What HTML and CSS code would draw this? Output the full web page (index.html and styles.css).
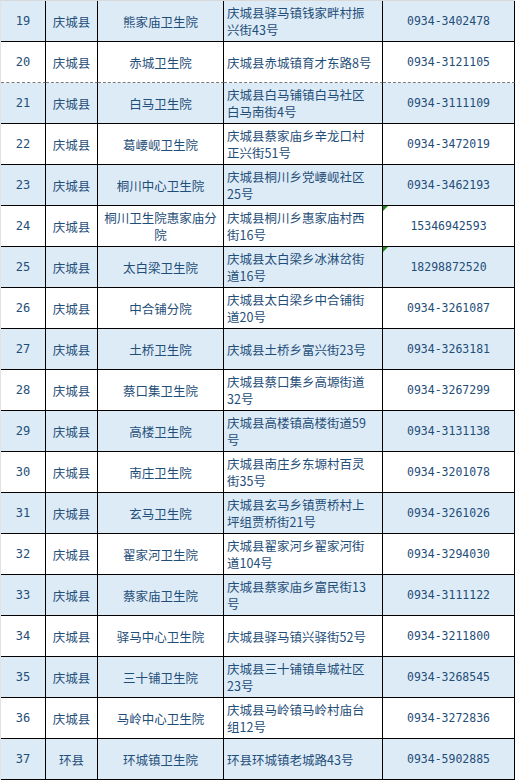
FILE: index.html
```html
<!DOCTYPE html>
<html lang="zh">
<head>
<meta charset="utf-8">
<title>卫生院名录</title>
<link rel="stylesheet" href="styles.css">
</head>
<body>
<div class="sheet">
  <div class="row odd"><div class="c no">19</div><div class="c county">庆城县</div><div class="c name">熊家庙卫生院</div><div class="c addr">庆城县驿马镇钱家畔村振<br>兴街43号</div><div class="c tel">0934-3402478</div></div>
  <div class="row even brk"><div class="c no">20</div><div class="c county">庆城县</div><div class="c name">赤城卫生院</div><div class="c addr">庆城县赤城镇育才东路8号</div><div class="c tel">0934-3121105</div></div>
  <div class="row odd"><div class="c no">21</div><div class="c county">庆城县</div><div class="c name">白马卫生院</div><div class="c addr">庆城县白马铺镇白马社区<br>白马南街4号</div><div class="c tel">0934-3111109</div></div>
  <div class="row even"><div class="c no">22</div><div class="c county">庆城县</div><div class="c name">葛崾岘卫生院</div><div class="c addr">庆城县蔡家庙乡辛龙口村<br>正兴街51号</div><div class="c tel">0934-3472019</div></div>
  <div class="row odd"><div class="c no">23</div><div class="c county">庆城县</div><div class="c name">桐川中心卫生院</div><div class="c addr">庆城县桐川乡党崾岘社区<br>25号</div><div class="c tel">0934-3462193</div></div>
  <div class="row even"><div class="c no">24</div><div class="c county">庆城县</div><div class="c name">桐川卫生院惠家庙分<br>院</div><div class="c addr">庆城县桐川乡惠家庙村西<br>街16号</div><div class="c tel mark">15346942593</div></div>
  <div class="row odd"><div class="c no">25</div><div class="c county">庆城县</div><div class="c name">太白梁卫生院</div><div class="c addr">庆城县太白梁乡冰淋岔街<br>道16号</div><div class="c tel mark">18298872520</div></div>
  <div class="row even"><div class="c no">26</div><div class="c county">庆城县</div><div class="c name">中合铺分院</div><div class="c addr">庆城县太白梁乡中合铺街<br>道20号</div><div class="c tel">0934-3261087</div></div>
  <div class="row odd"><div class="c no">27</div><div class="c county">庆城县</div><div class="c name">土桥卫生院</div><div class="c addr">庆城县土桥乡富兴街23号</div><div class="c tel">0934-3263181</div></div>
  <div class="row even"><div class="c no">28</div><div class="c county">庆城县</div><div class="c name">蔡口集卫生院</div><div class="c addr">庆城县蔡口集乡高塬街道<br>32号</div><div class="c tel">0934-3267299</div></div>
  <div class="row odd"><div class="c no">29</div><div class="c county">庆城县</div><div class="c name">高楼卫生院</div><div class="c addr">庆城县高楼镇高楼街道59<br>号</div><div class="c tel">0934-3131138</div></div>
  <div class="row even"><div class="c no">30</div><div class="c county">庆城县</div><div class="c name">南庄卫生院</div><div class="c addr">庆城县南庄乡东塬村百灵<br>街35号</div><div class="c tel">0934-3201078</div></div>
  <div class="row odd"><div class="c no">31</div><div class="c county">庆城县</div><div class="c name">玄马卫生院</div><div class="c addr">庆城县玄马乡镇贾桥村上<br>坪组贾桥街21号</div><div class="c tel">0934-3261026</div></div>
  <div class="row even"><div class="c no">32</div><div class="c county">庆城县</div><div class="c name">翟家河卫生院</div><div class="c addr">庆城县翟家河乡翟家河街<br>道104号</div><div class="c tel">0934-3294030</div></div>
  <div class="row odd"><div class="c no">33</div><div class="c county">庆城县</div><div class="c name">蔡家庙卫生院</div><div class="c addr">庆城县蔡家庙乡富民街13<br>号</div><div class="c tel">0934-3111122</div></div>
  <div class="row even"><div class="c no">34</div><div class="c county">庆城县</div><div class="c name">驿马中心卫生院</div><div class="c addr">庆城县驿马镇兴驿街52号</div><div class="c tel">0934-3211800</div></div>
  <div class="row odd"><div class="c no">35</div><div class="c county">庆城县</div><div class="c name">三十铺卫生院</div><div class="c addr">庆城县三十铺镇阜城社区<br>23号</div><div class="c tel">0934-3268545</div></div>
  <div class="row even"><div class="c no">36</div><div class="c county">庆城县</div><div class="c name">马岭中心卫生院</div><div class="c addr">庆城县马岭镇马岭村庙台<br>组12号</div><div class="c tel">0934-3272836</div></div>
  <div class="row odd"><div class="c no">37</div><div class="c county">环县</div><div class="c name">环城镇卫生院</div><div class="c addr">环县环城镇老城路43号</div><div class="c tel">0934-5902885</div></div>
</div>
</body>
</html>
```

FILE: styles.css
```css
html, body {
  margin: 0;
  padding: 0;
  background: #ffffff;
}

.sheet {
  width: 514px;
  border-left: 1px solid #e2e2e2;
  border-top: 1px solid #d8d8d8;
  font-family: "Noto Sans CJK SC", "Noto Sans", sans-serif;
  font-size: 12.5px;
  color: #1f4e78;
}

.row {
  display: grid;
  grid-template-columns: 45px 52px 126px 159px 132px;
  height: 41px;
}

.row.odd { background: #ddebf7; }
.row.even { background: #ffffff; }

.c {
  box-sizing: border-box;
  border-right: 1px solid #000000;
  border-bottom: 1px solid #000000;
  display: flex;
  align-items: center;
  justify-content: center;
  text-align: center;
  line-height: 17px;
  position: relative;
  white-space: nowrap;
}

.row.brk .c {
  border-bottom: 1px dashed #7a7a7a;
}

.no {
  font-family: "DejaVu Sans Mono", "Liberation Mono", monospace;
  font-size: 12px;
}

.addr {
  justify-content: flex-start;
  text-align: left;
  padding-left: 3px;
}

.tel {
  font-family: "DejaVu Sans Mono", "Liberation Mono", monospace;
  font-size: 11.5px;
}

.mark::before {
  content: "";
  position: absolute;
  left: 0;
  top: 0;
  width: 0;
  height: 0;
  border-top: 5px solid #1e8a1e;
  border-right: 5px solid transparent;
}
```
